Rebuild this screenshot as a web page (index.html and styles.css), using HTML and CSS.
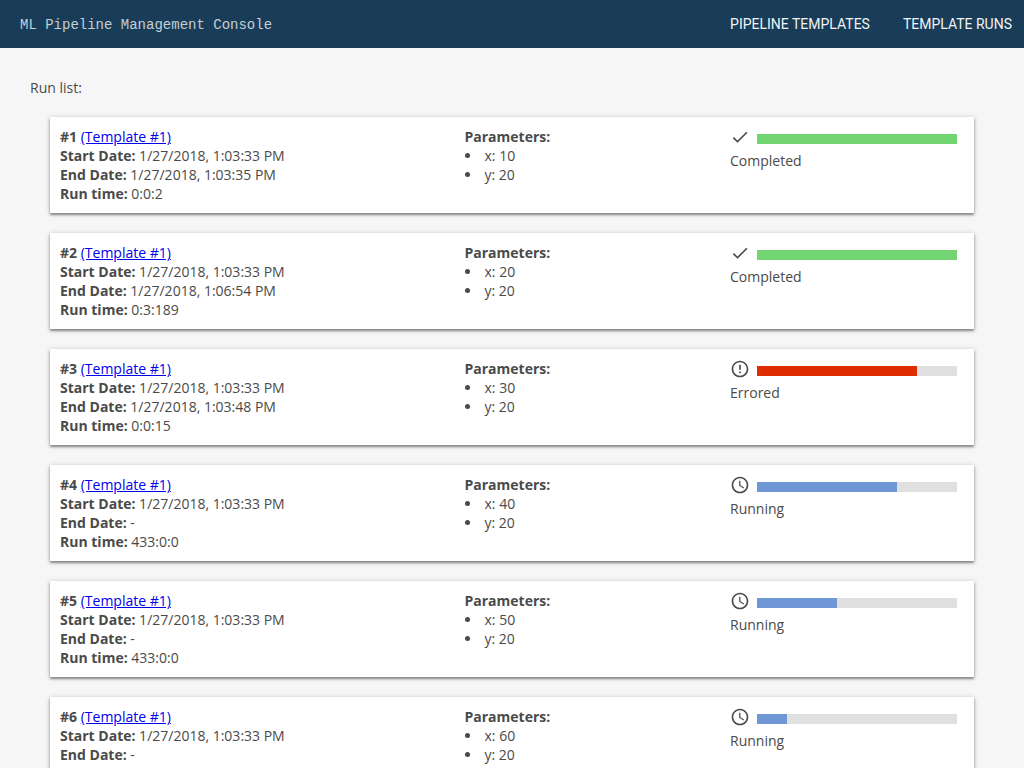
FILE: index.html
```html
<!DOCTYPE html>
<html lang="en">
<head>
<meta charset="utf-8">
<title>ML Pipeline Management Console</title>
<link rel="stylesheet" href="styles.css">
</head>
<body>
<header class="topbar">
  <div class="brand">ML Pipeline Management Console</div>
  <nav class="nav">
    <a class="nav-link">Pipeline Templates</a>
    <a class="nav-link">Template Runs</a>
  </nav>
</header>
<main class="content">
  <div class="list-title">Run list:</div>
  <div class="run-list">

    <section class="run-card">
      <div class="col-info">
        <div><b>#1</b> <a class="tpl" href="#">(Template #1)</a></div>
        <div><b>Start Date:</b> 1/27/2018, 1:03:33 PM</div>
        <div><b>End Date:</b> 1/27/2018, 1:03:35 PM</div>
        <div><b>Run time:</b> 0:0:2</div>
      </div>
      <div class="col-params">
        <b>Parameters:</b>
        <ul class="params"><li>x: 10</li><li>y: 20</li></ul>
      </div>
      <div class="col-status">
        <div class="status-row">
          <svg class="icon" viewBox="0 0 24 24"><path d="M9 16.2 4.8 12l-1.4 1.4L9 19 21 7l-1.4-1.4z"/></svg>
          <div class="bar"><div class="fill done" style="width:100%"></div></div>
        </div>
        <div class="status-label">Completed</div>
      </div>
    </section>

    <section class="run-card">
      <div class="col-info">
        <div><b>#2</b> <a class="tpl" href="#">(Template #1)</a></div>
        <div><b>Start Date:</b> 1/27/2018, 1:03:33 PM</div>
        <div><b>End Date:</b> 1/27/2018, 1:06:54 PM</div>
        <div><b>Run time:</b> 0:3:189</div>
      </div>
      <div class="col-params">
        <b>Parameters:</b>
        <ul class="params"><li>x: 20</li><li>y: 20</li></ul>
      </div>
      <div class="col-status">
        <div class="status-row">
          <svg class="icon" viewBox="0 0 24 24"><path d="M9 16.2 4.8 12l-1.4 1.4L9 19 21 7l-1.4-1.4z"/></svg>
          <div class="bar"><div class="fill done" style="width:100%"></div></div>
        </div>
        <div class="status-label">Completed</div>
      </div>
    </section>

    <section class="run-card">
      <div class="col-info">
        <div><b>#3</b> <a class="tpl" href="#">(Template #1)</a></div>
        <div><b>Start Date:</b> 1/27/2018, 1:03:33 PM</div>
        <div><b>End Date:</b> 1/27/2018, 1:03:48 PM</div>
        <div><b>Run time:</b> 0:0:15</div>
      </div>
      <div class="col-params">
        <b>Parameters:</b>
        <ul class="params"><li>x: 30</li><li>y: 20</li></ul>
      </div>
      <div class="col-status">
        <div class="status-row">
          <svg class="icon" viewBox="0 0 24 24"><path d="M11 15h2v2h-2zm0-8h2v6h-2zm1-5C6.47 2 2 6.48 2 12s4.47 10 10 10 10-4.48 10-10S17.52 2 12 2zm0 18c-4.42 0-8-3.58-8-8s3.58-8 8-8 8 3.58 8 8-3.58 8-8 8z"/></svg>
          <div class="bar"><div class="fill error" style="width:80%"></div></div>
        </div>
        <div class="status-label">Errored</div>
      </div>
    </section>

    <section class="run-card">
      <div class="col-info">
        <div><b>#4</b> <a class="tpl" href="#">(Template #1)</a></div>
        <div><b>Start Date:</b> 1/27/2018, 1:03:33 PM</div>
        <div><b>End Date:</b> -</div>
        <div><b>Run time:</b> 433:0:0</div>
      </div>
      <div class="col-params">
        <b>Parameters:</b>
        <ul class="params"><li>x: 40</li><li>y: 20</li></ul>
      </div>
      <div class="col-status">
        <div class="status-row">
          <svg class="icon" viewBox="0 0 24 24"><path d="M11.99 2C6.47 2 2 6.48 2 12s4.47 10 9.99 10C17.52 22 22 17.52 22 12S17.52 2 11.99 2zM12 20c-4.42 0-8-3.58-8-8s3.58-8 8-8 8 3.58 8 8-3.58 8-8 8zm.5-13H11v6l5.25 3.15.75-1.23-4.5-2.67z"/></svg>
          <div class="bar"><div class="fill running" style="width:70%"></div></div>
        </div>
        <div class="status-label">Running</div>
      </div>
    </section>

    <section class="run-card">
      <div class="col-info">
        <div><b>#5</b> <a class="tpl" href="#">(Template #1)</a></div>
        <div><b>Start Date:</b> 1/27/2018, 1:03:33 PM</div>
        <div><b>End Date:</b> -</div>
        <div><b>Run time:</b> 433:0:0</div>
      </div>
      <div class="col-params">
        <b>Parameters:</b>
        <ul class="params"><li>x: 50</li><li>y: 20</li></ul>
      </div>
      <div class="col-status">
        <div class="status-row">
          <svg class="icon" viewBox="0 0 24 24"><path d="M11.99 2C6.47 2 2 6.48 2 12s4.47 10 9.99 10C17.52 22 22 17.52 22 12S17.52 2 11.99 2zM12 20c-4.42 0-8-3.58-8-8s3.58-8 8-8 8 3.58 8 8-3.58 8-8 8zm.5-13H11v6l5.25 3.15.75-1.23-4.5-2.67z"/></svg>
          <div class="bar"><div class="fill running" style="width:40%"></div></div>
        </div>
        <div class="status-label">Running</div>
      </div>
    </section>

    <section class="run-card">
      <div class="col-info">
        <div><b>#6</b> <a class="tpl" href="#">(Template #1)</a></div>
        <div><b>Start Date:</b> 1/27/2018, 1:03:33 PM</div>
        <div><b>End Date:</b> -</div>
        <div><b>Run time:</b> 433:0:0</div>
      </div>
      <div class="col-params">
        <b>Parameters:</b>
        <ul class="params"><li>x: 60</li><li>y: 20</li></ul>
      </div>
      <div class="col-status">
        <div class="status-row">
          <svg class="icon" viewBox="0 0 24 24"><path d="M11.99 2C6.47 2 2 6.48 2 12s4.47 10 9.99 10C17.52 22 22 17.52 22 12S17.52 2 11.99 2zM12 20c-4.42 0-8-3.58-8-8s3.58-8 8-8 8 3.58 8 8-3.58 8-8 8zm.5-13H11v6l5.25 3.15.75-1.23-4.5-2.67z"/></svg>
          <div class="bar"><div class="fill running" style="width:15%"></div></div>
        </div>
        <div class="status-label">Running</div>
      </div>
    </section>

  </div>
</main>
</body>
</html>
```
FILE: styles.css
```css
html, body {
  margin: 0;
  padding: 0;
  height: 100%;
  overflow: hidden;
}
body {
  background: #f6f6f6;
  color: #4a4a4a;
  font-family: "Open Sans", sans-serif;
  font-size: 14px;
}
.topbar {
  display: flex;
  justify-content: space-between;
  align-items: center;
  height: 48px;
  padding: 0 12px 0 20px;
  background: #193d58;
}
.brand {
  font-family: "Courier New", "Liberation Mono", monospace;
  font-size: 14px;
  line-height: 16px;
  padding-top: 1px;
  color: #c5ced5;
}
.nav {
  display: flex;
  gap: 33px;
}
.nav-link {
  font-family: Roboto, sans-serif;
  font-size: 14px;
  text-transform: uppercase;
  color: #f1f3f5;
}
.content {
  padding: 30px;
}
.list-title {
  margin-bottom: 20px;
}
.run-list {
  display: flex;
  flex-direction: column;
  gap: 20px;
  padding: 0 20px;
}
.run-card {
  display: flex;
  flex: none;
  height: 96px;
  box-sizing: border-box;
  padding: 10px;
  background: #fff;
  box-shadow: 0 1px 5px rgba(0, 0, 0, 0.25), 0 2px 2px rgba(0, 0, 0, 0.35);
}
.col-info {
  width: 404.5px;
  flex: none;
}
.col-params {
  width: 265.5px;
  flex: none;
}
.params {
  margin: 0;
  padding: 0;
  list-style-position: inside;
}
.tpl {
  color: #0000ee;
}
.status-row {
  display: flex;
  align-items: flex-start;
  gap: 7px;
  height: 19px;
}
.icon {
  flex: none;
  width: 20px;
  height: 20px;
  fill: #4a4a4a;
}
.bar {
  width: 200px;
  height: 10px;
  margin-top: 7px;
  background: #e0e0e0;
}
.fill {
  height: 100%;
}
.done { background: #72d572; }
.error { background: #e02d00; }
.running { background: #6f97d6; }
.status-label {
  margin-top: 5px;
}
```
